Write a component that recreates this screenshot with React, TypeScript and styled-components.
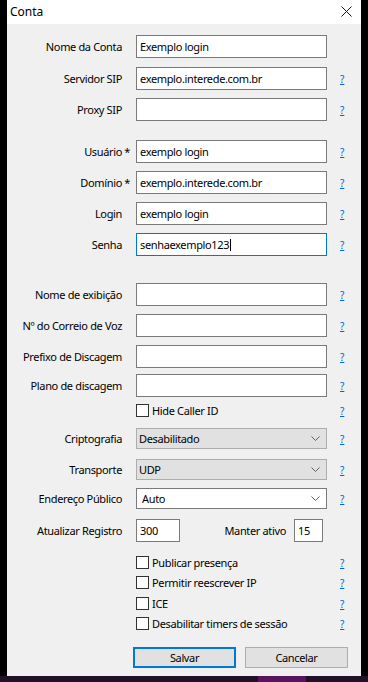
import React from 'react';
import styled, { createGlobalStyle } from 'styled-components';

const GlobalStyle = createGlobalStyle`
  * { box-sizing: border-box; }
  html, body {
    margin: 0;
    padding: 0;
    background: #000;
  }
  body {
    font-family: 'Noto Sans', 'Liberation Sans', sans-serif;
    font-size: 11px;
    letter-spacing: -0.35px;
    color: #000;
  }
`;

type Row =
  | { kind: 'input'; label: string; value?: string; required?: boolean; help?: boolean; focused?: boolean; pitch: number }
  | { kind: 'combo'; label: string; value: string; disabled?: boolean; pitch: number }
  | { kind: 'check'; label: string; pitch: number };

const topRows: Row[] = [
  { kind: 'input', label: 'Nome da Conta', value: 'Exemplo login', help: false, pitch: 32 },
  { kind: 'input', label: 'Servidor SIP', value: 'exemplo.interede.com.br', help: true, pitch: 31 },
  { kind: 'input', label: 'Proxy SIP', help: true, pitch: 42 },
  { kind: 'input', label: 'Usuário', value: 'exemplo login', required: true, help: true, pitch: 31 },
  { kind: 'input', label: 'Domínio', value: 'exemplo.interede.com.br', required: true, help: true, pitch: 31 },
  { kind: 'input', label: 'Login', value: 'exemplo login', help: true, pitch: 31 },
  { kind: 'input', label: 'Senha', value: 'senhaexemplo123', help: true, focused: true, pitch: 50 },
  { kind: 'input', label: 'Nome de exibição', help: true, pitch: 31 },
  { kind: 'input', label: 'Nº do Correio de Voz', help: true, pitch: 31 },
  { kind: 'input', label: 'Prefixo de Discagem', help: true, pitch: 29 },
  { kind: 'input', label: 'Plano de discagem', help: true, pitch: 30 },
  { kind: 'check', label: 'Hide Caller ID', pitch: 24 },
  { kind: 'combo', label: 'Criptografia', value: 'Desabilitado', disabled: true, pitch: 31 },
  { kind: 'combo', label: 'Transporte', value: 'UDP', disabled: true, pitch: 29 },
  { kind: 'combo', label: 'Endereço Público', value: 'Auto', pitch: 31 },
];

const bottomChecks: { label: string; pitch: number }[] = [
  { label: 'Publicar presença', pitch: 20 },
  { label: 'Permitir reescrever IP', pitch: 21 },
  { label: 'ICE', pitch: 20 },
  { label: 'Desabilitar timers de sessão', pitch: 30 },
];

const Chevron = () => (
  <svg width="9" height="5" viewBox="0 0 9 5">
    <path d="M0.5 0.5 L4.5 4.5 L8.5 0.5" fill="none" stroke="#606060" strokeWidth="1" />
  </svg>
);

const CloseIcon = () => (
  <svg width="11" height="11" viewBox="0 0 11 11">
    <path d="M0.5 0.5 L10.5 10.5 M10.5 0.5 L0.5 10.5" fill="none" stroke="#111" strokeWidth="1" />
  </svg>
);

const renderField = (row: Row) => {
  if (row.kind === 'input') {
    return (
      <TextBox $focused={!!row.focused}>
        {row.value}
        {row.focused && <Caret />}
      </TextBox>
    );
  }
  if (row.kind === 'combo') {
    return (
      <Combo $disabled={!!row.disabled}>
        <span>{row.value}</span>
        <Chevron />
      </Combo>
    );
  }
  return (
    <CheckLine>
      <CheckBox />
      {row.label}
    </CheckLine>
  );
};

const App = () => {
  return (
    <Page>
      <GlobalStyle />
      <Desk>
        <Window>
          <TitleBar>
            <Title>Conta</Title>
            <CloseButton>
              <CloseIcon />
            </CloseButton>
          </TitleBar>

          <Body>
            {topRows.map((row) => {
              const h = row.kind === 'input' ? 23 : row.kind === 'combo' ? 21 : 13;
              const hasHelp = row.kind === 'input' ? row.help !== false : true;
              return (
                <FormRow key={row.label} $pitch={row.pitch}>
                  <Label $h={h}>
                    {row.kind !== 'check' && row.label}
                    {row.kind === 'input' && row.required && <Required>*</Required>}
                  </Label>
                  <FieldSlot>{renderField(row)}</FieldSlot>
                  {hasHelp && <Help $h={h}>?</Help>}
                </FormRow>
              );
            })}

            <FormRow $pitch={37}>
              <Label $h={23}>Atualizar Registro</Label>
              <FieldSlot>
                <TextBox $focused={false} $w={44}>300</TextBox>
                <InlineLabel>Manter ativo</InlineLabel>
                <TextBox $focused={false} $w={29} $trail={4}>15</TextBox>
              </FieldSlot>
            </FormRow>

            {bottomChecks.map((c) => (
              <FormRow key={c.label} $pitch={c.pitch}>
                <Label $h={13} />
                <FieldSlot>
                  <CheckLine>
                    <CheckBox />
                    {c.label}
                  </CheckLine>
                </FieldSlot>
                <Help $h={13}>?</Help>
              </FormRow>
            ))}

            <ButtonBar>
              <DialogButton $default>Salvar</DialogButton>
              <DialogButton>Cancelar</DialogButton>
            </ButtonBar>
          </Body>
        </Window>
      </Desk>
      <Taskbar>
        <TaskSegment $w={258} />
        <TaskSegment $w={48} $active />
        <TaskSegment $w={62} />
      </Taskbar>
    </Page>
  );
};

const Page = styled.div`
  width: 368px;
  height: 682px;
  display: flex;
  flex-direction: column;
  overflow: hidden;
`;

const Desk = styled.div`
  height: 676px;
  padding: 0 7px;
  background: #000;
  display: flex;
`;

const Window = styled.div`
  width: 354px;
  height: 676px;
  background: #f0f0f0;
  display: flex;
  flex-direction: column;
`;

const TitleBar = styled.div`
  height: 24px;
  background: #fff;
  display: flex;
  align-items: center;
  justify-content: space-between;
  padding: 0 9px 0 3px;
`;

const Title = styled.span`
  font-size: 12px;
  letter-spacing: 0;
  color: #000;
  margin-top: -1px;
`;

const CloseButton = styled.div`
  display: flex;
  align-items: center;
  justify-content: center;
  width: 12px;
  height: 12px;
  margin-top: -1px;
`;

const Body = styled.div`
  flex: 1;
  padding-top: 11px;
  display: flex;
  flex-direction: column;
`;

const FormRow = styled.div<{ $pitch: number }>`
  height: ${(p) => p.$pitch}px;
  display: flex;
  align-items: flex-start;
`;

const Label = styled.div<{ $h: number }>`
  width: 115px;
  height: ${(p) => p.$h}px;
  display: flex;
  align-items: center;
  justify-content: flex-end;
  position: relative;
  white-space: nowrap;
`;

const Required = styled.span`
  position: absolute;
  right: -8px;
  top: 4px;
  font-size: 11px;
`;

const FieldSlot = styled.div`
  width: 191px;
  margin-left: 14px;
  display: flex;
  align-items: center;
`;

const TextBox = styled.div<{ $focused: boolean; $w?: number; $trail?: number }>`
  width: ${(p) => (p.$w ? `${p.$w}px` : '100%')};
  height: 23px;
  margin-right: ${(p) => p.$trail ?? 0}px;
  background: #fff;
  border: 1px solid ${(p) => (p.$focused ? '#0078d7' : '#7a7a7a')};
  padding: 0 3px;
  display: flex;
  align-items: center;
  white-space: nowrap;
  overflow: hidden;
`;

const Caret = styled.span`
  display: inline-block;
  width: 1px;
  height: 12px;
  background: #000;
  margin-left: 1px;
`;

const InlineLabel = styled.span`
  margin-left: auto;
  margin-right: 8px;
`;

const Combo = styled.div<{ $disabled: boolean }>`
  width: 100%;
  height: 21px;
  background: ${(p) => (p.$disabled ? '#e1e1e1' : '#fff')};
  border: 1px solid ${(p) => (p.$disabled ? '#adadad' : '#7a7a7a')};
  padding: 0 6px 0 ${(p) => (p.$disabled ? 2 : 5)}px;
  display: flex;
  align-items: center;
  justify-content: space-between;
`;

const CheckLine = styled.div`
  height: 13px;
  display: flex;
  align-items: center;
  gap: 3px;
  white-space: nowrap;
`;

const CheckBox = styled.span`
  width: 13px;
  height: 13px;
  flex: none;
  background: #fff;
  border: 1px solid #333;
`;

const Help = styled.span<{ $h: number }>`
  margin-left: 13px;
  height: ${(p) => p.$h}px;
  display: flex;
  align-items: center;
  color: #0066cc;
  text-decoration: underline;
  font-size: 10px;
  letter-spacing: 0;
`;

const ButtonBar = styled.div`
  display: flex;
  gap: 9px;
  padding-left: 126px;
`;

const DialogButton = styled.div<{ $default?: boolean }>`
  width: 103px;
  height: 21px;
  background: #e1e1e1;
  border: ${(p) => (p.$default ? '2px solid #0078d7' : '1px solid #adadad')};
  display: flex;
  align-items: center;
  justify-content: center;
`;

const Taskbar = styled.div`
  height: 6px;
  display: flex;
`;

const TaskSegment = styled.div<{ $w: number; $active?: boolean }>`
  width: ${(p) => p.$w}px;
  background: ${(p) => (p.$active ? '#58145e' : '#220f28')};
`;

export default App;
